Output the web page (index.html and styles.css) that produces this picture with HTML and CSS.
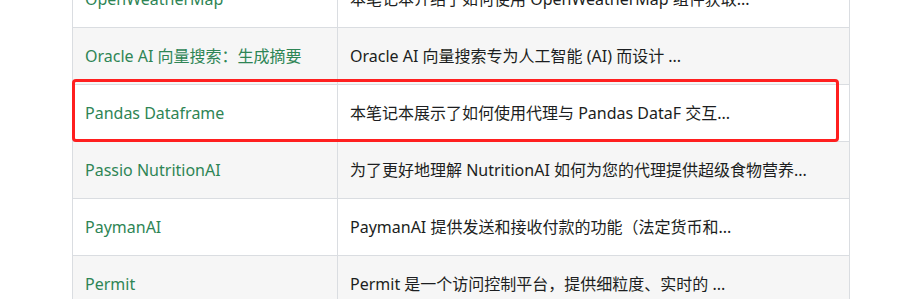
FILE: index.html
```html
<!DOCTYPE html>
<html lang="zh-CN">
<head>
	<meta charset="UTF-8">
	<meta name="viewport" content="width=device-width">
	<title>工具列表</title>
	<link rel="stylesheet" href="styles.css">
</head>
<body>
<main class="doc">

<div class="table-wrap">
<table class="tool-table">
	<tbody>
		<tr>
			<td><a href="#">OpenWeatherMap</a></td>
			<td>本笔记本介绍了如何使用 OpenWeatherMap 组件获取...</td>
		</tr>
		<tr>
			<td><a href="#">Oracle AI 向量搜索：生成摘要</a></td>
			<td>Oracle AI 向量搜索专为人工智能 (AI) 而设计 ...</td>
		</tr>
		<tr>
			<td><a href="#">Pandas Dataframe</a></td>
			<td>本笔记本展示了如何使用代理与 Pandas DataF 交互...</td>
		</tr>
		<tr>
			<td><a href="#">Passio NutritionAI</a></td>
			<td>为了更好地理解 NutritionAI 如何为您的代理提供超级食物营养...</td>
		</tr>
		<tr>
			<td><a href="#">PaymanAI</a></td>
			<td>PaymanAI 提供发送和接收付款的功能（法定货币和...</td>
		</tr>
		<tr>
			<td><a href="#">Permit</a></td>
			<td>Permit 是一个访问控制平台，提供细粒度、实时的 ...</td>
		</tr>
	</tbody>
</table>

<!-- highlight around the Pandas row -->
<div class="mark-box"></div>
</div>

</main>
</body>
</html>
```

FILE: styles.css
```css
html, body {
	margin: 0;
	background: #fff;
}

body {
	font-family: "Noto Sans", "Noto Sans CJK SC", sans-serif;
	font-size: 16px;
	color: #1c1e21;
	overflow: hidden;
}

.doc {
	padding-left: 72px;
}

/* page is scrolled a bit, so the first row sits half above the fold */
.table-wrap {
	position: relative;
	width: 778px;
	margin-top: -30px;
}

table.tool-table {
	border-collapse: collapse;
	width: 100%;
	table-layout: fixed;
}

table.tool-table td {
	border: 1px solid #dadde1;
	padding: 15px 12px;
	line-height: 26px;
	text-align: left;
	white-space: nowrap;
	overflow: hidden;
}

table.tool-table td:first-child {
	width: 240px;
}

table.tool-table tr:nth-child(even) {
	background-color: #f6f6f6;
}

table.tool-table a {
	color: #2e8555;
	text-decoration: none;
}

.mark-box {
	position: absolute;
	left: 0;
	top: 109px;
	width: 761px;
	height: 57px;
	border: 3px solid #ff1f1f;
	border-radius: 4px;
	pointer-events: none;
}
```
